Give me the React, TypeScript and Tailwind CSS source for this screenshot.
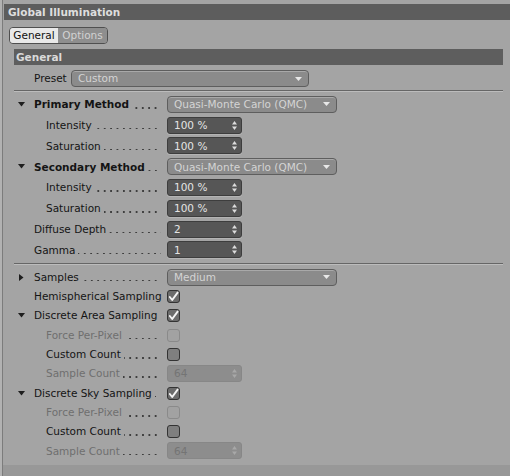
import type { ReactNode } from "react";

const font = { fontFamily: '"DejaVu Sans", "Liberation Sans", sans-serif' };

function TwistDown() {
  return (
    <svg width="7" height="5" viewBox="0 0 7 5" className="block">
      <path d="M0 0 L7 0 L3.5 4.5 Z" fill="#1e1e1e" />
    </svg>
  );
}

function TwistRight() {
  return (
    <svg width="5" height="7" viewBox="0 0 5 7" className="block">
      <path d="M0 0 L4.5 3.5 L0 7 Z" fill="#1e1e1e" />
    </svg>
  );
}

function Dropdown({ value, width }: { value: string; width: string }) {
  return (
    <div
      className={`${width} h-[17px] flex items-center justify-between rounded-[4px] border border-[#5e5e5e] bg-[#8b8b8b] pl-[6px] pr-[6px] shadow-[inset_0_1px_0_#a9a9a9]`}
    >
      <span className="text-[10.5px] text-[#d4d4d4] leading-none">{value}</span>
      <svg width="7" height="4" viewBox="0 0 7 4" className="block">
        <path d="M0 0 L7 0 L3.5 4 Z" fill="#e8e8e8" />
      </svg>
    </div>
  );
}

function Spinner({ disabled }: { disabled?: boolean }) {
  const c = disabled ? "#a8a8a8" : "#dcdcdc";
  return (
    <svg width="5" height="9" viewBox="0 0 5 9" className="block">
      <path d="M0 3.5 L5 3.5 L2.5 0 Z" fill={c} />
      <path d="M0 5.5 L5 5.5 L2.5 9 Z" fill={c} />
    </svg>
  );
}

function NumField({ value, disabled }: { value: string; disabled?: boolean }) {
  return (
    <div
      className={
        disabled
          ? "w-[75px] h-[17px] flex items-center justify-between rounded-[3px] border border-[#878787] bg-[#8d8d8d] pl-[6px] pr-[4px]"
          : "w-[75px] h-[17px] flex items-center justify-between rounded-[3px] border border-[#3d3d3d] bg-[#565656] pl-[6px] pr-[4px] shadow-[0_1px_0_#b4b4b4]"
      }
    >
      <span className={`text-[10.5px] leading-none ${disabled ? "text-[#747474]" : "text-[#e4e4e4]"}`}>{value}</span>
      <Spinner disabled={disabled} />
    </div>
  );
}

function Check({ checked, disabled }: { checked?: boolean; disabled?: boolean }) {
  return (
    <div
      className={
        disabled
          ? "w-[13px] h-[13px] rounded-[3px] border border-[#8a8a8a] bg-[#a2a2a2]"
          : checked
            ? "w-[13px] h-[13px] rounded-[3px] border border-[#333] bg-[#6c6c6c] flex items-center justify-center"
            : "w-[13px] h-[13px] rounded-[3px] border border-[#333] bg-[#7f7f7f]"
      }
    >
      {checked && (
        <svg width="11" height="11" viewBox="0 0 11 11" className="block">
          <path d="M1.8 6 L4.2 9 L9.6 1.6" stroke="#f4f4f4" strokeWidth="1.9" fill="none" strokeLinejoin="round" strokeLinecap="round" />
        </svg>
      )}
    </div>
  );
}

interface RowProps {
  label: string;
  sub?: boolean;
  bold?: boolean;
  disabled?: boolean;
  twisty?: "down" | "right";
  h: string;
  children?: ReactNode;
}

function Row({ label, sub, bold, disabled, twisty, h, children }: RowProps) {
  return (
    <div className={`flex items-center ${h}`}>
      <div className="w-[153px] flex items-center pr-[6px]">
        <div className="w-[20px] pl-[4px] shrink-0 flex items-center">
          {twisty === "down" && <TwistDown />}
          {twisty === "right" && <div className="pl-[1px]"><TwistRight /></div>}
        </div>
        {sub && <div className="w-[12px] shrink-0" />}
        <span
          className={`whitespace-nowrap text-[10.5px] leading-none ${bold ? "font-bold" : ""} ${disabled ? "text-[#6f6f6f]" : "text-[#141414]"}`}
        >
          {label}
        </span>
        {/* leader dots */}
        <div className="flex-1 ml-[3px] h-[1.5px] mt-[7px] bg-[linear-gradient(to_right,#3e3e3e_1.5px,transparent_1.5px)] bg-[length:6.4px_1.5px] bg-right bg-repeat-x" />
      </div>
      {children}
    </div>
  );
}

function Separator() {
  return (
    <div className="flex flex-col">
      <div className="h-px bg-[#666]" />
      <div className="h-px bg-[#bcbcbc]" />
    </div>
  );
}

export default function App() {
  const a = "h-[20.8px]";
  const b = "h-[19.33px]";
  return (
    <div className="w-[510px] h-[476px] bg-[#a4a4a4] flex overflow-hidden" style={font}>
      <div className="w-[2px] bg-[#b2b2b2]" />
      <div className="w-px bg-[#7c7c7c]" />
      <div className="flex-1 flex flex-col">
        <div className="h-[4px]" />
        <div className="ml-px h-[16px] bg-[#5d5d5d] flex items-center pl-[4px]">
          <span className="text-[10.5px] font-bold text-[#dedede] leading-none">Global Illumination</span>
        </div>
        <div className="h-[7px]" />
        <div className="ml-[6px] flex h-[17px]">
          <div className="flex rounded-[4px] border border-[#4f4f4f] overflow-hidden">
            <div className="w-[48px] bg-[#e9e9e9] flex items-center justify-center text-[10.5px] text-[#111] leading-none">
              General
            </div>
            <div className="w-[49px] bg-[#8e8e8e] flex items-center justify-center text-[10.5px] text-[#d2d2d2] leading-none">
              Options
            </div>
          </div>
        </div>
        <div className="h-[5px]" />
        <div className="ml-[11px] mr-[7px] flex flex-col">
          <div className="h-[16px] bg-[#5e5e5e] flex items-center pl-[2px]">
            <span className="text-[10.5px] font-bold text-[#dadada] leading-none">General</span>
          </div>
          <div className="h-[3px]" />
          <div className="h-[20px] flex items-center pl-[20px] pt-px">
            <span className="text-[10.5px] text-[#141414] leading-none w-[37px]">Preset</span>
            <Dropdown value="Custom" width="w-[238px]" />
          </div>
          <div className="h-[2px]" />
          <Separator />
          <div className="h-[2px]" />
          <Row label="Primary Method" bold twisty="down" h={a}>
            <Dropdown value="Quasi-Monte Carlo (QMC)" width="w-[170px]" />
          </Row>
          <Row label="Intensity" sub h={a}>
            <NumField value="100 %" />
          </Row>
          <Row label="Saturation" sub h={a}>
            <NumField value="100 %" />
          </Row>
          <Row label="Secondary Method" bold twisty="down" h={a}>
            <Dropdown value="Quasi-Monte Carlo (QMC)" width="w-[170px]" />
          </Row>
          <Row label="Intensity" sub h={a}>
            <NumField value="100 %" />
          </Row>
          <Row label="Saturation" sub h={a}>
            <NumField value="100 %" />
          </Row>
          <Row label="Diffuse Depth" h={a}>
            <NumField value="2" />
          </Row>
          <Row label="Gamma" h={a}>
            <NumField value="1" />
          </Row>
          <div className="h-[3px]" />
          <Separator />
          <div className="h-[2px]" />
          <Row label="Samples" twisty="right" h={b}>
            <Dropdown value="Medium" width="w-[170px]" />
          </Row>
          <Row label="Hemispherical Sampling" h={b}>
            <Check checked />
          </Row>
          <Row label="Discrete Area Sampling" twisty="down" h={b}>
            <Check checked />
          </Row>
          <Row label="Force Per-Pixel" sub disabled h={b}>
            <Check disabled />
          </Row>
          <Row label="Custom Count" sub h={b}>
            <Check />
          </Row>
          <Row label="Sample Count" sub disabled h={b}>
            <NumField value="64" disabled />
          </Row>
          <Row label="Discrete Sky Sampling" twisty="down" h={b}>
            <Check checked />
          </Row>
          <Row label="Force Per-Pixel" sub disabled h={b}>
            <Check disabled />
          </Row>
          <Row label="Custom Count" sub h={b}>
            <Check />
          </Row>
          <Row label="Sample Count" sub disabled h={b}>
            <NumField value="64" disabled />
          </Row>
        </div>
        <div className="flex-1" />
        <div className="h-[11px] bg-[#989898]" />
      </div>
    </div>
  );
}
